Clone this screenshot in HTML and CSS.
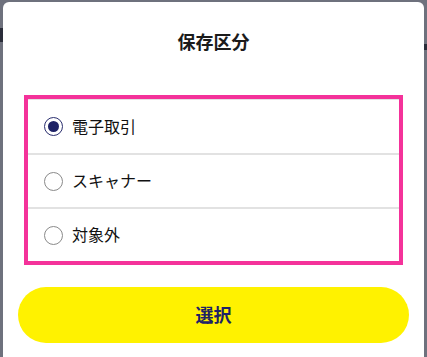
FILE: index.html
```html
<!DOCTYPE html>
<html lang="ja">
<head>
<meta charset="utf-8">
<link rel="stylesheet" href="styles.css">
</head>
<body>
<div class="backdrop-mark mark-left"></div>
<div class="backdrop-mark mark-right"></div>
<div class="modal">
  <h2 class="title">保存区分</h2>
  <div class="options">
    <label class="option">
      <span class="radio checked"></span>
      <span class="label">電子取引</span>
    </label>
    <label class="option">
      <span class="radio"></span>
      <span class="label">スキャナー</span>
    </label>
    <label class="option">
      <span class="radio"></span>
      <span class="label">対象外</span>
    </label>
  </div>
  <button class="select-btn">選択</button>
</div>
</body>
</html>
```
FILE: styles.css
```css
html, body {
  margin: 0;
  padding: 0;
}
body {
  background: #6e717d;
  font-family: "Noto Sans CJK JP", "Noto Sans", sans-serif;
  color: #222;
  position: relative;
  height: 100vh;
  padding-top: 2px;
  box-sizing: border-box;
  display: flex;
  flex-direction: column;
}
.backdrop-mark {
  position: absolute;
  background: #2a2d3a;
  width: 3px;
}
.mark-left { left: 0; top: 28px; height: 14px; }
.mark-right { right: 0; top: 44px; height: 6px; }
.modal {
  flex: 1;
  margin: 0 3px;
  background: #fff;
  border-radius: 6px 6px 0 0;
  padding: 26px 15px 0;
}
.title {
  margin: 0;
  text-align: center;
  font-size: 18px;
  line-height: 26px;
  font-weight: 700;
  color: #1b1b1b;
}
.options {
  margin: 41px 6px 0;
  border: 4px solid #f4329a;
  display: flex;
  flex-direction: column;
}
.option {
  display: flex;
  align-items: center;
  height: 52px;
  padding-left: 16px;
  border-top: 2px solid #e2e2e2;
  gap: 9px;
}
.option:first-child {
  border-top-width: 1px;
  height: 53px;
}
.radio {
  width: 19px;
  height: 19px;
  border-radius: 50%;
  border: 1.5px solid #8a8a8a;
  box-sizing: border-box;
  background: #fff;
  position: relative;
}
.radio.checked {
  border-color: #2a2e6e;
}
.radio.checked::after {
  content: "";
  position: absolute;
  left: 2.5px;
  top: 2.5px;
  width: 11px;
  height: 11px;
  border-radius: 50%;
  background: #1e2266;
}
.label {
  font-size: 16px;
  line-height: 20px;
  color: #111;
  margin-top: -2px;
}
.select-btn {
  display: block;
  width: 100%;
  margin-top: 22px;
  height: 56px;
  border: none;
  border-radius: 28px;
  background: #fff200;
  font-family: "Noto Sans CJK JP", "Noto Sans", sans-serif;
  font-size: 18px;
  font-weight: 700;
  color: #1e2266;
  padding: 0 0 3px;
}
```
